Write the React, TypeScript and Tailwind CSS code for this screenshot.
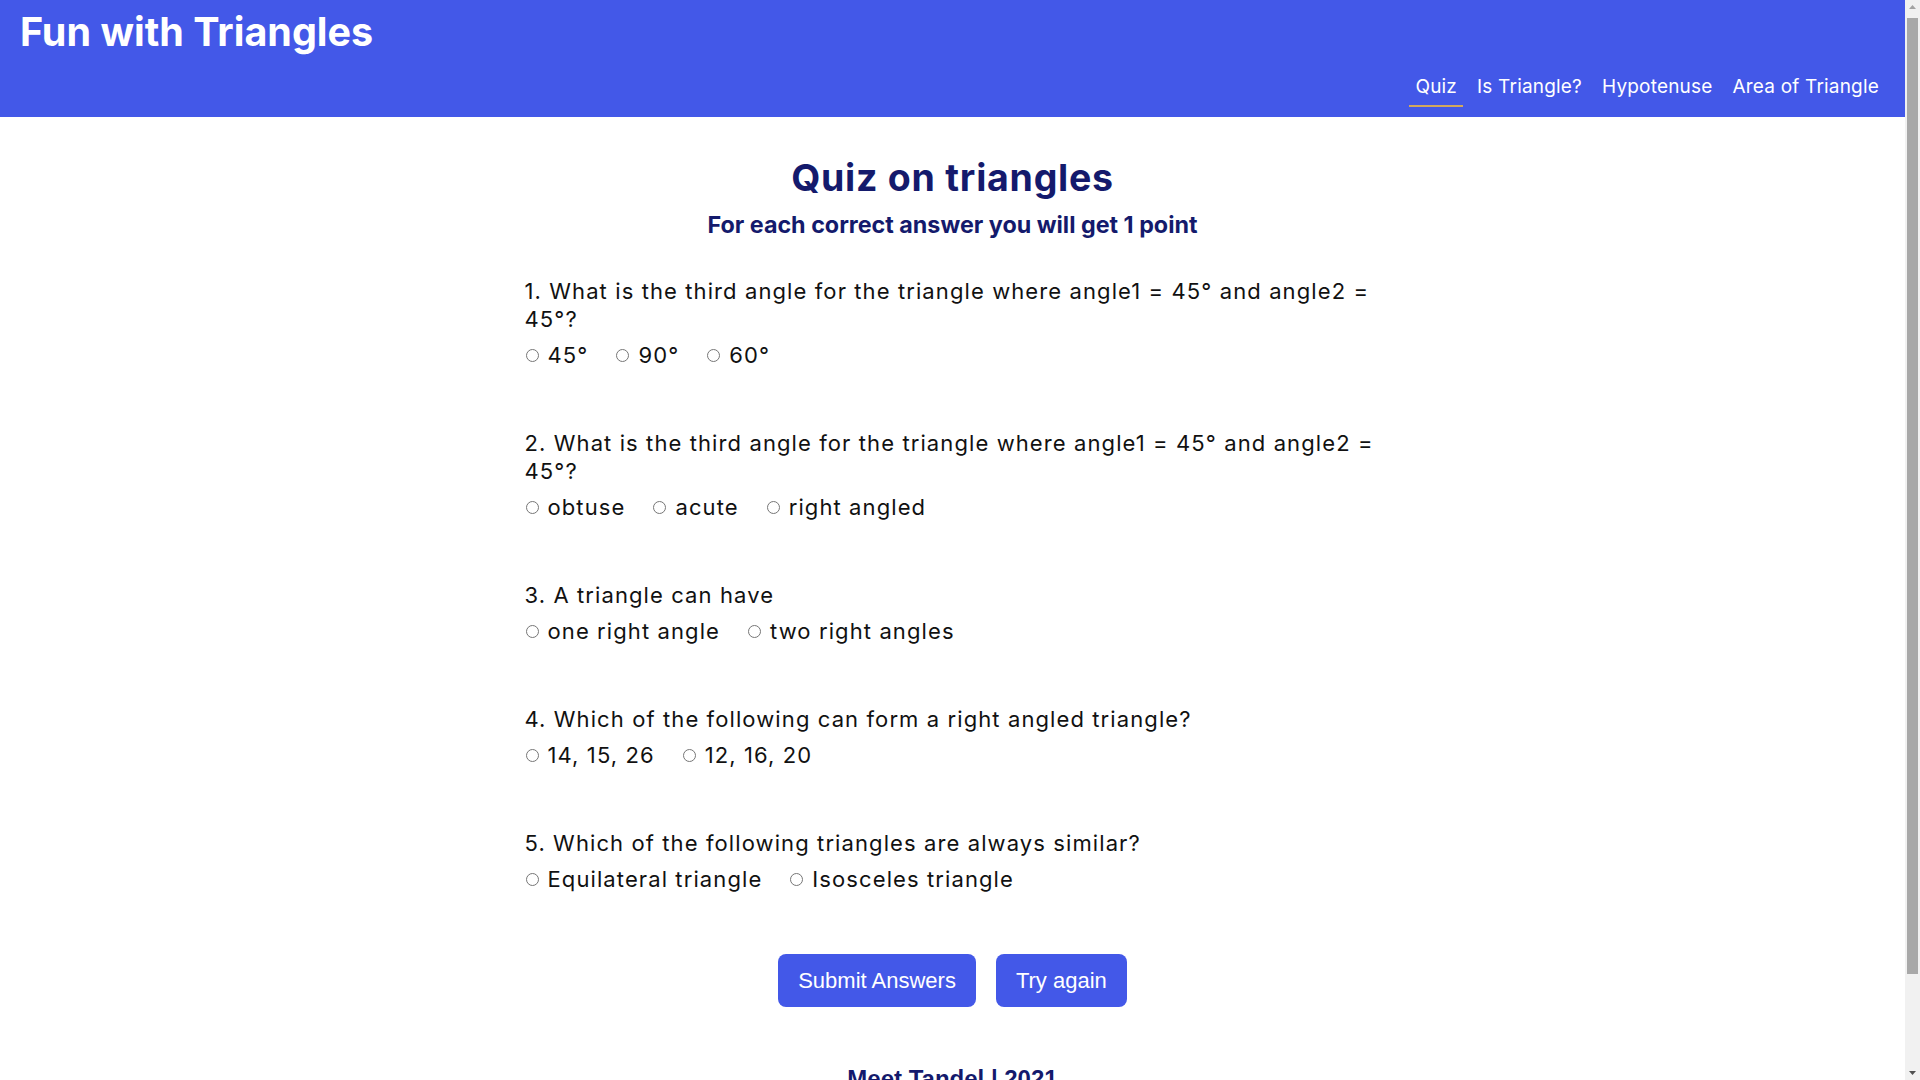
const QUESTIONS = [
  {
    q: "1. What is the third angle for the triangle where angle1 = 45° and angle2 = 45°?",
    options: ["45°", "90°", "60°"],
  },
  {
    q: "2. What is the third angle for the triangle where angle1 = 45° and angle2 = 45°?",
    options: ["obtuse", "acute", "right angled"],
  },
  {
    q: "3. A triangle can have",
    options: ["one right angle", "two right angles"],
  },
  {
    q: "4. Which of the following can form a right angled triangle?",
    options: ["14, 15, 26", "12, 16, 20"],
  },
  {
    q: "5. Which of the following triangles are always similar?",
    options: ["Equilateral triangle", "Isosceles triangle"],
  },
];

const LINKS = ["Quiz", "Is Triangle?", "Hypotenuse", "Area of Triangle"];

function Scrollbar() {
  // classic browser scrollbar sitting over the right edge
  return (
    <div className="fixed right-0 top-0 flex h-screen w-[15px] flex-col items-center bg-[#f1f1f1]">
      <svg width="15" height="15" viewBox="0 0 15 15" className="shrink-0">
        <path d="M4 9 L7.5 5 L11 9 Z" fill="#a3a3a3" />
      </svg>
      <div className="mt-[3px] h-[956px] w-[11px] bg-[#a8a8a8]" />
      <div className="flex-1" />
      <svg width="15" height="15" viewBox="0 0 15 15" className="shrink-0">
        <path d="M4 6 L7.5 10 L11 6 Z" fill="#505050" />
      </svg>
    </div>
  );
}

export default function App() {
  return (
    <div className="min-h-screen bg-white pr-[15px] font-['Inter',sans-serif]">
      {/* Header */}
      <header className="flex h-[117px] flex-col justify-between bg-[#4358e8] px-5">
        <h1 className="pt-[13px] text-[39.5px] font-bold leading-none text-white">
          Fun with Triangles
        </h1>
        <nav className="flex justify-end gap-[8px] pb-[10px]">
          {LINKS.map((link, i) => (
            <a
              key={link}
              href="#"
              className={
                i === 0
                  ? "border-b-2 border-[#d2a85e] px-[6px] pb-[4px] text-[19px] leading-[28px] tracking-[0.01em] text-white"
                  : "border-b-2 border-transparent px-[6px] pb-[4px] text-[19px] leading-[28px] tracking-[0.01em] text-white"
              }
            >
              {link}
            </a>
          ))}
        </nav>
      </header>

      {/* Quiz */}
      <main className="mx-auto flex w-[856px] flex-col">
        <h1 className="mt-[39px] text-center text-[37.5px] font-bold leading-[44px] tracking-[0.02em] text-[#141a6c]">
          Quiz on triangles
        </h1>
        <h2 className="mt-[9px] text-center text-[23.3px] font-bold leading-[32px] text-[#141a6c]">
          For each correct answer you will get 1 point
        </h2>

        <form className="mt-[36px] flex flex-col gap-[60px]">
          {QUESTIONS.map((item, qi) => (
            <div key={qi} className="flex flex-col gap-[8px] text-[22px] leading-[28px] tracking-[0.05em] text-[#111]">
              <p>{item.q}</p>
              <div className="flex items-center gap-[27px]">
                {item.options.map((opt) => (
                  <label key={opt} className="flex items-center gap-[9px]">
                    <input type="radio" name={`q${qi}`} className="m-0 ml-[1px] h-[13px] w-[13px]" />
                    {opt}
                  </label>
                ))}
              </div>
            </div>
          ))}
        </form>

        <div className="mt-[61px] flex justify-center gap-5">
          <button className="rounded-lg bg-[#4358e8] px-5 py-[14px] font-['Liberation_Sans',sans-serif] text-[22px] leading-[25px] text-white">
            Submit Answers
          </button>
          <button className="rounded-lg bg-[#4358e8] px-5 py-[14px] font-['Liberation_Sans',sans-serif] text-[22px] leading-[25px] text-white">
            Try again
          </button>
        </div>
      </main>

      {/* Footer */}
      <footer className="mt-[58px] pb-[89px] text-center font-['Liberation_Sans',sans-serif] text-[24px] font-bold leading-[28px] text-[#141a6c]">
        Meet Tandel | 2021
      </footer>

      <Scrollbar />
    </div>
  );
}
